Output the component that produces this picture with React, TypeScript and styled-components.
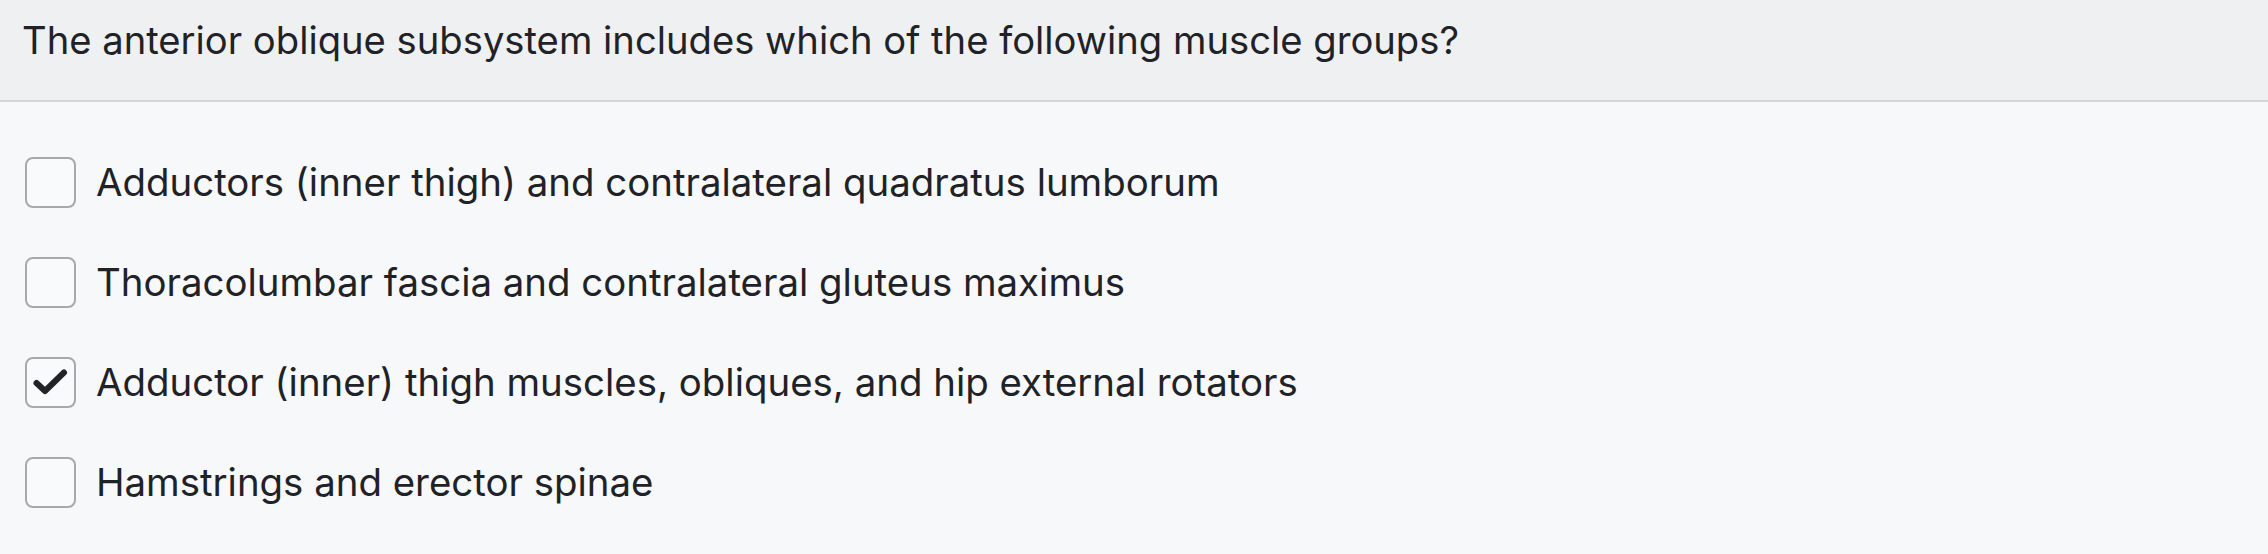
import React from "react";
import styled, { createGlobalStyle } from "styled-components";

const Global = createGlobalStyle`
  html, body { margin: 0; padding: 0; background: #f7f8fa; }
  body { font-family: Inter, "Liberation Sans", sans-serif; color: #1f2226; }
`;

const Card = styled.div`
  width: 2268px;
  min-height: 554px;
  background: #f7f8fa;
`;

const Header = styled.div`
  box-sizing: border-box;
  height: 102px;
  padding: 16px 22px 0;
  background: #eff0f2;
  border-bottom: 2px solid #d5d6d8;
  font-size: 38.2px;
  line-height: 48px;
`;

const List = styled.div`
  display: flex;
  flex-direction: column;
  padding: 30px 25px 22px;
`;

const Row = styled.label`
  display: flex;
  align-items: center;
  height: 100px;
  gap: 20px;
  font-size: 38.4px;
  line-height: 48px;
`;

const Box = styled.span`
  box-sizing: border-box;
  flex: none;
  width: 51px;
  height: 51px;
  border: 2px solid #a9a9aa;
  border-radius: 8px;
  background: #f9fafb;
  display: flex;
  align-items: center;
  justify-content: center;
`;

const options = [
  { text: "Adductors (inner thigh) and contralateral quadratus lumborum", checked: false },
  { text: "Thoracolumbar fascia and contralateral gluteus maximus", checked: false },
  { text: "Adductor (inner) thigh muscles, obliques, and hip external rotators", checked: true },
  { text: "Hamstrings and erector spinae", checked: false },
];

export default function App() {
  return (
    <Card>
      <Global />
      <Header>The anterior oblique subsystem includes which of the following muscle groups?</Header>
      <List>
        {options.map((o) => (
          <Row key={o.text}>
            <Box>
              {o.checked && (
                <svg width="38" height="30" viewBox="0 0 38 30">
                  <path d="M4.5 16 L13 24 L32 5.5" fill="none" stroke="#222326" strokeWidth="6" strokeLinecap="round" strokeLinejoin="round" />
                </svg>
              )}
            </Box>
            <span>{o.text}</span>
          </Row>
        ))}
      </List>
    </Card>
  );
}
